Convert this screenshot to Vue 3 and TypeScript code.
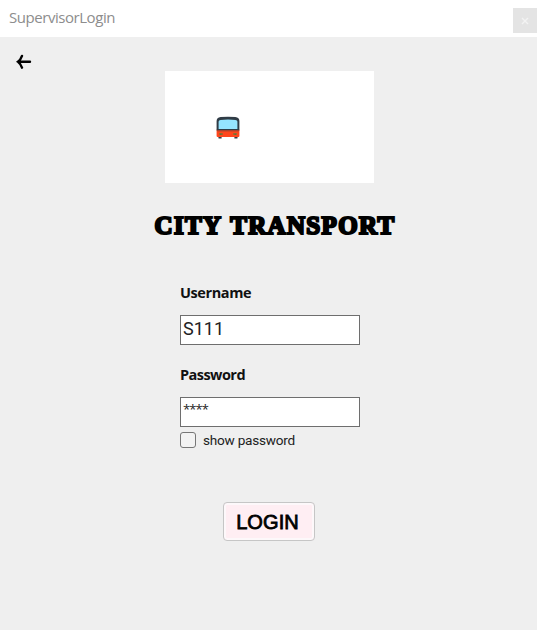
<script setup lang="ts">
import { ref } from 'vue'

const username = ref('S111')
const password = ref('****')
const showPassword = ref(false)
</script>

<template>
  <div class="window">
    <header class="titlebar">
      <span class="caption">SupervisorLogin</span>
      <button class="close" aria-label="Close">
        <svg width="8" height="8" viewBox="0 0 8 8"><path d="M1 1L7 7M7 1L1 7" /></svg>
      </button>
    </header>
    <main class="body">
      <button class="back" aria-label="Back">
        <svg width="16" height="17" viewBox="0 0 16 17">
          <path d="M14 8.8H2M6 2.9C5 5.8 3.8 7.5 2 8.8C3.8 10.1 5 11.8 6 14.7" />
        </svg>
      </button>
      <div class="logo">
        <svg width="26" height="24" viewBox="0 0 26 24">
          <path d="M3 19h3.6v3.6H3.6zM19.4 19H23l-.6 3.6h-3z" fill="#333b42" />
          <path d="M1.6 13.5h22.8V20q0 1-1 1H2.6q-1 0-1-1z" fill="#ff461c" />
          <path d="M1.6 14.5V5q0-3.4 4-3.9 7.4-.8 14.8 0 4 .5 4 3.9v9.5z" fill="#303c46" />
          <path d="M3.6 13V5.8q0-1.7 2-1.9 7.4-.7 14.8 0 2 .2 2 1.9V13z" fill="#94e4ff" />
          <path d="M2.5 15h21" stroke="#b8452b" />
          <path d="M4 17h4v2H4zM18 17h4v2h-4z" fill="#a5662a" />
          <path d="M5 18.2h1.5M19.5 18.2H21" stroke="#49763f" />
        </svg>
      </div>
      <h1 class="brand">CITY TRANSPORT</h1>
      <form class="form" @submit.prevent>
        <label class="label" for="user">Username</label>
        <input id="user" v-model="username" class="field" type="text" />
        <label class="label second" for="pass">Password</label>
        <input id="pass" v-model="password" class="field secret" type="text" />
        <label class="check">
          <input v-model="showPassword" class="box" type="checkbox" />
          <span>show password</span>
        </label>
        <button class="login" type="submit">LOGIN</button>
      </form>
    </main>
  </div>
</template>

<style>
body {
  margin: 0;
  background: #efefef;
}
</style>

<style scoped>
.window {
  width: 537px;
  height: 630px;
  overflow: hidden;
  background: #efefef;
  font-family: "Open Sans", "Noto Sans", sans-serif;
  color: #111;
}
.window * {
  box-sizing: border-box;
}
.titlebar {
  display: flex;
  justify-content: space-between;
  height: 37px;
  padding-left: 9px;
  background: #fff;
}
.caption {
  line-height: 34px;
  font-size: 15px;
  letter-spacing: -0.45px;
  color: #8d8d8d;
}
.close {
  display: flex;
  align-items: center;
  justify-content: center;
  width: 24px;
  height: 25px;
  margin-top: 8px;
  padding: 0;
  border: 0;
  background: #e4e4e4;
}
.close path {
  stroke: #f3f3f3;
  stroke-width: 1.4;
}
.body {
  display: flex;
  flex-direction: column;
}
.back {
  width: 16px;
  height: 17px;
  margin: 16px 0 0 16px;
  padding: 0;
  border: 0;
  background: none;
}
.back svg {
  display: block;
}
.back path {
  fill: none;
  stroke: #000;
  stroke-width: 2.4;
  stroke-linecap: round;
}
.logo {
  width: 209px;
  height: 112px;
  margin: 1px 0 0 165px;
  padding: 45px 0 0 50px;
  background: #fff;
}
.logo svg {
  display: block;
}
.brand {
  margin: 26px 0 0 154.5px;
  height: 33px;
  line-height: 33px;
  font-family: "Liberation Serif", serif;
  font-size: 25px;
  font-weight: 700;
  letter-spacing: 1.35px;
  word-spacing: 1.5px;
  white-space: nowrap;
  color: #000;
  -webkit-text-stroke: 2.2px #000;
}
.form {
  display: flex;
  flex-direction: column;
  width: 180px;
  margin: 41px 0 0 180px;
}
.label {
  height: 20px;
  line-height: 20px;
  font-size: 14.5px;
  letter-spacing: -0.4px;
  font-weight: 700;
}
.second {
  margin-top: 19px;
  padding-top: 1px;
  letter-spacing: -0.55px;
}
.field {
  width: 180px;
  height: 30px;
  margin-top: 12px;
  padding: 0 1px 3px 2px;
  border: 1px solid #6e6e6e;
  border-radius: 0;
  background: #fff;
  font-family: Roboto, sans-serif;
  font-size: 18px;
  color: #222;
  outline: none;
}
.second + .field {
  margin-top: 13px;
}
.secret {
  padding-bottom: 6px;
  font-family: "Open Sans", sans-serif;
  font-size: 13px;
  letter-spacing: -0.9px;
}
.check {
  display: flex;
  align-items: center;
  gap: 7px;
  height: 18px;
  margin-top: 4px;
  font-family: Roboto, sans-serif;
  font-size: 13.6px;
  letter-spacing: -0.23px;
  white-space: nowrap;
  color: #222;
}
.box {
  appearance: none;
  width: 16px;
  height: 16px;
  margin: 0;
  border: 1px solid #777;
  border-radius: 3px;
  background: #f3f3f3;
}
.login {
  width: 92px;
  height: 39px;
  margin: 53px 0 0 43px;
  padding: 1px 3px 0 0;
  border: 1px solid #c6c6c6;
  border-radius: 4px;
  background: #ffeef3;
  box-shadow: inset 0 0 0 2px #fdf8fa;
  font-family: "Liberation Sans", sans-serif;
  font-size: 20px;
  letter-spacing: 0.1px;
  color: #000;
  -webkit-text-stroke: 0.8px #000;
}
</style>
